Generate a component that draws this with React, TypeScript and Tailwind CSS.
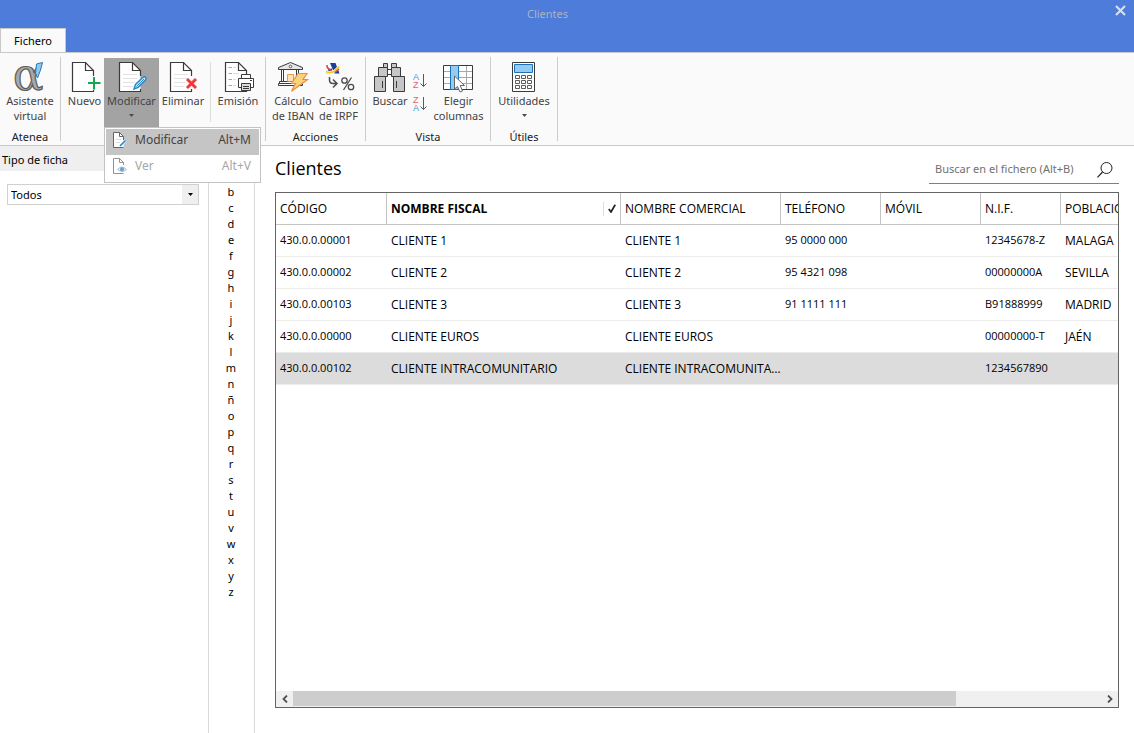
import React, { useState } from 'react';

type Client = {
    code: string;
    fiscal: string;
    commercial: string;
    phone: string;
    mobile: string;
    nif: string;
    city: string;
}

const clients: Client[] = [
    { code: "430.0.0.00001", fiscal: "CLIENTE 1", commercial: "CLIENTE 1", phone: "95 0000 000", mobile: "", nif: "12345678-Z", city: "MALAGA" },
    { code: "430.0.0.00002", fiscal: "CLIENTE 2", commercial: "CLIENTE 2", phone: "95 4321 098", mobile: "", nif: "00000000A", city: "SEVILLA" },
    { code: "430.0.0.00103", fiscal: "CLIENTE 3", commercial: "CLIENTE 3", phone: "91 1111 111", mobile: "", nif: "B91888999", city: "MADRID" },
    { code: "430.0.0.00000", fiscal: "CLIENTE EUROS", commercial: "CLIENTE EUROS", phone: "", mobile: "", nif: "00000000-T", city: "JAÉN" },
    { code: "430.0.0.00102", fiscal: "CLIENTE INTRACOMUNITARIO", commercial: "CLIENTE INTRACOMUNITARIO", phone: "", mobile: "", nif: "1234567890", city: "" },
]

const letters = "abcdefghijklmnñopqrstuvwxyz".split("")

const PageShape = ({ lines = false }: { lines?: boolean }) => (
    <>
        <path d="M3.5 1.5H16.5L24.5 9.5V30.5H3.5Z" fill="#fff" />
        {lines && <path d="M7 13.5H21M7 17.5H21M7 21.5H19M7 25.5H17" stroke="#e2e2e2" fill="none" />}
        <path d="M24.5 15V9.5L16.5 1.5H3.5V30.5H24.5V28" stroke="#3b3b3b" fill="none" strokeWidth="1.2" />
        <path d="M16.5 1.5V9.5H24.5" stroke="#3b3b3b" fill="none" strokeWidth="1.2" />
    </>
)

const AlphaIcon = () => (
    <svg width="32" height="32" viewBox="0 0 32 32">
        <text x="-1" y="29" fontSize="45" fontFamily="DejaVu Serif, serif" fill="#a9a9a9" stroke="#5c5c5c" strokeWidth="1.2">α</text>
        <path d="M22.5 3L28.5 1.5L26.5 9L23.5 17L21.5 12Z" fill="#8fc7ee" stroke="#2a78b8" />
    </svg>
)

const NewIcon = () => (
    <svg width="32" height="32" viewBox="0 0 32 32">
        <PageShape />
        <path d="M21 15h8v14h-8z" fill="#fafafa" />
        <path d="M25 16V28.5M19 22H31.5" stroke="#14a751" strokeWidth="2" />
    </svg>
)

const EditIcon = () => (
    <svg width="32" height="32" viewBox="0 0 32 32">
        <PageShape lines />
        <path d="M18 28L19.5 23.5L27 16.2Q28.5 15.2 29.7 16.4Q30.5 17.7 29.5 19L22.2 26.3Z" fill="#cfe6f7" stroke="#2389cf" strokeWidth="1.4" />
        <path d="M20.5 25.5L28 18" stroke="#2389cf" />
    </svg>
)

const DeleteIcon = () => (
    <svg width="32" height="32" viewBox="0 0 32 32">
        <PageShape lines />
        <path d="M23 16h6v12h-6z" fill="#fafafa" />
        <path d="M20 18L29 27M29 18L20 27" stroke="#ee3a3a" strokeWidth="3" />
    </svg>
)

const PrintIcon = () => (
    <svg width="32" height="32" viewBox="0 0 32 32">
        <PageShape />
        <path d="M11 6.5H14M11 12.5H17M11 18.5H14M11 24.5H14" stroke="#ddd" />
        <path d="M6.5 6.5H10M6.5 12.5H10M6.5 18.5H10M6.5 24.5H10" stroke="#f09a2c" strokeWidth="1.2" />
        <path d="M15 13H32V30H15Z" fill="#fafafa" />
        <path d="M19.5 17.5V13.5H28.5V17.5" fill="#fff" stroke="#3b3b3b" />
        <path d="M16.5 17.5H31.5V26.5H16.5Z" fill="#fff" stroke="#3b3b3b" />
        <path d="M19.5 22.5H28.5V29.5H19.5Z" fill="#ddd" stroke="#3b3b3b" />
        <path d="M21 25.5H27M21 27.5H27M28 19.5H30" stroke="#3b3b3b" />
    </svg>
)

const BankIcon = () => (
    <svg width="32" height="32" viewBox="0 0 32 32">
        <path d="M1.5 8.5V6.5L13.5 1.5L25.5 6.5V8.5Z" fill="#e6e6e6" stroke="#3b3b3b" />
        <circle cx="13.5" cy="5.5" r="1.3" fill="#fff" stroke="#3b3b3b" strokeWidth=".8" />
        <path d="M4.5 9V20.5H6.5V9M19.5 9V20.5H21.5V9" fill="#fff" stroke="#3b3b3b" />
        <path d="M2.5 20.5H24.5V22.5H2.5ZM1.5 22.5H25.5V24.5H1.5Z" fill="#fff" stroke="#3b3b3b" />
        <path d="M10.5 20.5V13.5H16.5V20.5" fill="#ffe2b8" stroke="#e89a3c" />
        <path d="M21 12.5H30L26 18.5H30.5L14.5 30.3L18.5 22.5H14.5Z" fill="#fdd27c" stroke="#ea8f3e" strokeWidth="1.2" />
    </svg>
)

const TaxIcon = () => (
    <svg width="32" height="32" viewBox="0 0 32 32">
        <path d="M7 2H12.5L16.500 12.500H11.500Z" fill="#1a4196" />
        <path d="M5.500 8L9.500 7.500L7.500 12.500H3.500Z" fill="#1a4196" />
        <path d="M4 4Q3.500 7.500 9 10" stroke="#e23b3b" strokeWidth="1.500" fill="none" />
        <path d="M3 10.500Q10 14 16 5.500" stroke="#fff" strokeWidth="3" fill="none" />
        <path d="M3 10.500Q10 14 16 5.500" stroke="#f8c91c" strokeWidth="1.800" fill="none" />
        <path d="M12 11.500L16 8" stroke="#e23b3b" strokeWidth="1.200" />
        <path d="M6.500 16V19Q6.500 22.500 10 22.500H13.500M10 18.500L14 22.500L10 26.500" stroke="#4a4a4a" strokeWidth="1.500" fill="none" />
        <circle cx="21.500" cy="19.500" r="2.700" fill="none" stroke="#4a4a4a" strokeWidth="1.300" />
        <circle cx="28" cy="26" r="2.700" fill="none" stroke="#4a4a4a" strokeWidth="1.300" />
        <path d="M28.500 16.500L20.500 29" stroke="#4a4a4a" strokeWidth="1.300" />
    </svg>
)

const BinocularsIcon = () => (
    <svg width="32" height="32" viewBox="0 0 32 32">
        <g fill="#c6c6c6" stroke="#3b3b3b">
            <path d="M9.500 2.500H13.500V6.500H9.500ZM17.500 2.500H22.500V6.500H17.500Z" />
            <path d="M13.500 8.500H17.500V13.500H13.500Z" fill="#fff" />
            <path d="M4.500 6.500H13.500V15.500H4.500ZM17.500 6.500H26.500V15.500H17.500Z" />
            <path d="M.5 15.500H11.500V30.500H.5ZM19.500 15.500H30.500V30.500H19.500Z" />
            <path d="M8.500 20V27M22.500 20V27" />
        </g>
    </svg>
)

const SortIcon = ({ top, bottom }: { top: string, bottom: string }) => (
    <svg width="16" height="17" viewBox="0 0 16 17" fontFamily="Liberation Sans, sans-serif" fontSize="9">
        <text x="1" y="8" fill={top === "A" ? "#3c9bd6" : "#ea6060"}>{top}</text>
        <text x="1" y="16" fill={bottom === "A" ? "#3c9bd6" : "#ea6060"}>{bottom}</text>
        <path d="M11.500 2V14.500M8.500 11.500L11.500 14.500L14.500 11.500" stroke="#5a5a5a" fill="none" />
    </svg>
)

const ColumnsIcon = () => (
    <svg width="32" height="32" viewBox="0 0 32 32">
        <path d="M.5 4.500H29.500V28.500H.5Z" fill="#fff" />
        <path d="M1 10.500H29M1 16.500H29M1 22.500H29M23.500 5V28" stroke="#a8a8a8" />
        <path d="M.5 4.500H29.500V28.500H.5Z" fill="none" stroke="#3b3b3b" />
        <path d="M7.500 4.500H15.500V28.500H7.500Z" fill="#95cbf1" stroke="#1c70b8" />
        <path d="M11.500 15V28L14.500 25.500L17 31L19.500 30L17.200 24.500H21.500Z" fill="#fff" stroke="#666" />
    </svg>
)

const CalculatorIcon = () => (
    <svg width="32" height="32" viewBox="0 0 32 32">
        <path d="M4.500 1.500H26.500V30.500H4.500Z" fill="#fff" stroke="#3b3b3b" />
        <path d="M6.500 3.500H24.500V11.500H6.500Z" fill="#95cbf1" stroke="#1c70b8" />
        <path d="M7.500 14.500h4v3h-4zM13.500 14.500h4v3h-4zM19.500 14.500h4v3h-4zM7.500 19.500h4v3h-4zM13.500 19.500h4v3h-4zM19.500 19.500h4v3h-4zM7.500 24.500h4v3h-4zM13.500 24.500h4v3h-4zM19.500 24.500h4v3h-4z" fill="#fff" stroke="#5c5c5c" />
    </svg>
)

const MenuPageIcon = ({ eye = false }: { eye?: boolean }) => (
    <svg width="16" height="16" viewBox="0 0 16 16" className={eye ? "opacity-70" : ""}>
        <path d="M1.500 .5H7.500L11.500 4.500V15.500H1.500Z" fill="#fff" />
        <path d="M11.500 8V4.500L7.500 .5H1.500V15.500H11.500M7.500 .5V4.500H11.500" fill="none" stroke="#666" />
        {eye ? (
            <>
                <path d="M6 7h8v8h-8z" fill="#fff" />
                <path d="M5.500 11.500Q10 6.500 14.500 11.500Q10 15.500 5.500 11.500Z" fill="#cfe3f2" stroke="#8aa9c0" />
                <circle cx="10" cy="11.300" r="2" fill="#2b78b5" />
            </>
        ) : (
            <>
                <path d="M3.500 7.500H9M3.500 10.500H8" stroke="#ddd" />
                <path d="M8.500 13.500L13.500 8.500" stroke="#fff" strokeWidth="3" />
                <path d="M8 14L13.500 8.500" stroke="#2389cf" strokeWidth="1.700" />
            </>
        )}
    </svg>
)

const Arrow = () => (
    <svg width="5" height="15" viewBox="0 0 5 15">
        <path d="M0 6H5L2.500 9Z" fill="#4a4a4a" />
    </svg>
)

const Group = ({ label, children }: { label: string, children: React.ReactNode }) => (
    <div className="flex">
        <div className="flex flex-col pt-px">
            <div className="flex h-[69px]">{children}</div>
            <div className="mt-[2px] text-center leading-4 text-[#222]">{label}</div>
        </div>
        <div className="h-[84px] w-px bg-[#cccccc]" />
    </div>
)

type RibbonButtonProps = {
    icon: React.ReactNode;
    label: string;
    second?: string;
    width: string;
    arrow?: boolean;
    active?: boolean;
    onClick?: () => void;
}

const RibbonButton = ({ icon, label, second, width, arrow, active, onClick }: RibbonButtonProps) => (
    <button onClick={onClick} className={`flex flex-col items-center pt-[3px] leading-[15px] whitespace-nowrap text-[#444] ${width} ${active ? "bg-[#a3a3a3]" : ""}`}>
        {icon}
        <span>{label}</span>
        {second && <span>{second}</span>}
        {arrow && <Arrow />}
    </button>
)

const App = () => {

    const [menuOpen, setMenuOpen] = useState(true);
    const [selected, setSelected] = useState(4);

    return (
        <div className="flex min-h-screen flex-col bg-white font-['Noto_Sans',sans-serif] text-[11px] text-black">
            <header className="flex h-[52px] flex-col justify-between bg-[#4d7cdb]">
                <div className="flex h-7 items-center">
                    <h1 className="flex-1 pr-5 text-center text-[#a9b3c6]">Clientes</h1>
                    <button aria-label="Cerrar" className="mr-2 mb-2 w-[11px]">
                        <svg width="11" height="11" viewBox="0 0 11 11">
                            <path d="M1 1L10 10M10 1L1 10" stroke="#dedede" strokeWidth="2.200" />
                        </svg>
                    </button>
                </div>
                <button className="-mb-px h-[25px] w-[66px] border border-b-0 border-[#c8c8c8] bg-[#fafafa]">Fichero</button>
            </header>

            <div className="flex h-[94px] border-y border-[#c8c8c8] bg-[#fafafa] pt-1">
                <Group label="Atenea">
                    <RibbonButton icon={<AlphaIcon />} label="Asistente" second="virtual" width="w-[60px]" />
                </Group>
                <Group label="">
                    <div className="flex pl-1">
                        <RibbonButton icon={<NewIcon />} label="Nuevo" width="w-[39px]" />
                        <div className="relative flex">
                            <RibbonButton icon={<EditIcon />} label="Modificar" width="w-[55px]" arrow active={menuOpen} onClick={() => setMenuOpen(!menuOpen)} />
                            {menuOpen && (
                                <div className="absolute top-[69px] left-0 z-10 flex w-[157px] flex-col border border-[#c3c3c3] bg-white p-px text-xs">
                                    <button className="flex h-[26px] items-center bg-[#c5c5c5] pr-2 pb-1 pl-1.5 text-[#444]">
                                        <MenuPageIcon />
                                        <span className="ml-[7px] flex-1 text-left">Modificar</span>
                                        <span>Alt+M</span>
                                    </button>
                                    <button className="flex h-[26px] items-center pr-2 pb-1 pl-1.5 text-[#a6a6a6]">
                                        <MenuPageIcon eye />
                                        <span className="ml-[7px] flex-1 text-left">Ver</span>
                                        <span>Alt+V</span>
                                    </button>
                                </div>
                            )}
                        </div>
                        <RibbonButton icon={<DeleteIcon />} label="Eliminar" width="w-[48px]" />
                        <div className="mt-1 ml-[3px] h-[60px] w-px bg-[#dddddd]" />
                        <RibbonButton icon={<PrintIcon />} label="Emisión" width="w-[54px]" />
                    </div>
                </Group>
                <Group label="Acciones">
                    <div className="flex px-1">
                        <RibbonButton icon={<BankIcon />} label="Cálculo" second="de IBAN" width="w-[46px]" />
                        <RibbonButton icon={<TaxIcon />} label="Cambio" second="de IRPF" width="w-[45px]" />
                    </div>
                </Group>
                <Group label="Vista">
                    <div className="flex pr-[3px] pl-1">
                        <RibbonButton icon={<BinocularsIcon />} label="Buscar" width="w-[40px]" />
                        <div className="flex w-5 flex-col items-center gap-1.5 pt-3.5">
                            <button aria-label="Orden ascendente"><SortIcon top="A" bottom="Z" /></button>
                            <button aria-label="Orden descendente"><SortIcon top="Z" bottom="A" /></button>
                        </div>
                        <RibbonButton icon={<ColumnsIcon />} label="Elegir" second="columnas" width="w-[57px]" />
                    </div>
                </Group>
                <Group label="Útiles">
                    <RibbonButton icon={<CalculatorIcon />} label="Utilidades" width="w-[66px]" arrow />
                </Group>
            </div>

            <div className="flex flex-1">
                <aside className="w-[209px] shrink-0 border-r border-[#d9d9d9]">
                    <label htmlFor="tipo" className="block h-[25px] bg-[#efefef] pl-0.5 leading-7">Tipo de ficha</label>
                    <div className="relative mx-[7px] mt-[13px] mr-[9px] flex h-[21px] border border-[#d0d0d0]">
                        <select id="tipo" className="w-full appearance-none bg-white pt-px pl-[3px] outline-none">
                            <option>Todos</option>
                        </select>
                        <span className="pointer-events-none absolute inset-y-0 right-0 flex w-4 items-center justify-center bg-[#efefef]">
                            <svg width="5" height="3" viewBox="0 0 5 3"><path d="M0 0H5L2.500 3Z" /></svg>
                        </span>
                    </div>
                </aside>

                <nav className="flex w-[46px] shrink-0 flex-col items-center border-r border-[#d9d9d9] pt-[22px]">
                    {letters.map(l => (
                        <button key={l} className="h-4 w-full pr-px leading-4">{l}</button>
                    ))}
                </nav>

                <main className="flex min-w-0 flex-1 flex-col pr-[15px] pb-[25px] pl-5">
                    <div className="flex h-[46px] items-start justify-between">
                        <h2 className="pt-2 font-['Open_Sans',sans-serif] text-lg">Clientes</h2>
                        <div className="flex h-[38px] w-[190px] items-center border-b border-[#808080] px-1.5 pt-2.5">
                            <input aria-label="Buscar en el fichero" placeholder="Buscar en el fichero (Alt+B)" className="min-w-0 flex-1 outline-none placeholder:text-[#707070]" />
                            <svg width="16" height="16" viewBox="0 0 16 16">
                                <circle cx="9.500" cy="6" r="5.500" fill="none" stroke="#222" />
                                <path d="M5.500 10L.5 15.300" stroke="#222" strokeWidth="1.200" />
                            </svg>
                        </div>
                    </div>

                    <div className="flex flex-1 flex-col border border-[#646464] font-['Open_Sans',sans-serif] text-xs">
                        <div className="flex-1 overflow-hidden">
                            <table className="w-[1000px] table-fixed border-separate border-spacing-0 text-left">
                                <thead>
                                    <tr className="h-8 *:border-r *:border-b *:border-[#c4c4c4] *:p-0 *:pl-1 *:font-normal">
                                        <th className="w-[111px]">CÓDIGO</th>
                                        <th className="w-[234px]">
                                            <div className="flex items-center justify-between">
                                                <span className="font-bold">NOMBRE FISCAL</span>
                                                <span className="flex h-3.5 items-center border-l border-[#dddddd] pr-1 pl-1">
                                                    <svg width="8" height="9" viewBox="0 0 8 9">
                                                        <path d="M.8 5L3 8L7.200 .8" fill="none" stroke="#222" strokeWidth="1.700" />
                                                    </svg>
                                                </span>
                                            </div>
                                        </th>
                                        <th className="w-[160px]">NOMBRE COMERCIAL</th>
                                        <th className="w-[100px]">TELÉFONO</th>
                                        <th className="w-[100px]">MÓVIL</th>
                                        <th className="w-[80px]">N.I.F.</th>
                                        <th>POBLACIÓN</th>
                                    </tr>
                                </thead>
                                <tbody>
                                    {clients.map((c, i) => (
                                        <tr key={c.code} onClick={() => setSelected(i)} className={`h-8 *:truncate *:border-b *:border-[#ececec] *:p-0 *:pl-1 ${i === selected ? "bg-[#dcdcdc]" : ""}`}>
                                            <td className="text-[11px]">{c.code}</td>
                                            <td>{c.fiscal}</td>
                                            <td>{c.commercial}</td>
                                            <td className="text-[11px]">{c.phone}</td>
                                            <td className="text-[11px]">{c.mobile}</td>
                                            <td className="text-[11px]">{c.nif}</td>
                                            <td>{c.city}</td>
                                        </tr>
                                    ))}
                                </tbody>
                            </table>
                        </div>
                        <div className="flex h-4 bg-[#f0f0f0]">
                            <button aria-label="Izquierda" className="flex w-[17px] items-center justify-center">
                                <svg width="6" height="8" viewBox="0 0 6 8"><path d="M5 .5L1.500 4L5 7.500" fill="none" stroke="#505050" strokeWidth="1.800" /></svg>
                            </button>
                            <div className="flex-1 pb-px">
                                <div className="h-full w-[82%] bg-[#cdcdcd]" />
                            </div>
                            <button aria-label="Derecha" className="flex w-[17px] items-center justify-center">
                                <svg width="6" height="8" viewBox="0 0 6 8"><path d="M1 .5L4.500 4L1 7.500" fill="none" stroke="#505050" strokeWidth="1.800" /></svg>
                            </button>
                        </div>
                    </div>
                </main>
            </div>
        </div>
    );
};

export default App;
